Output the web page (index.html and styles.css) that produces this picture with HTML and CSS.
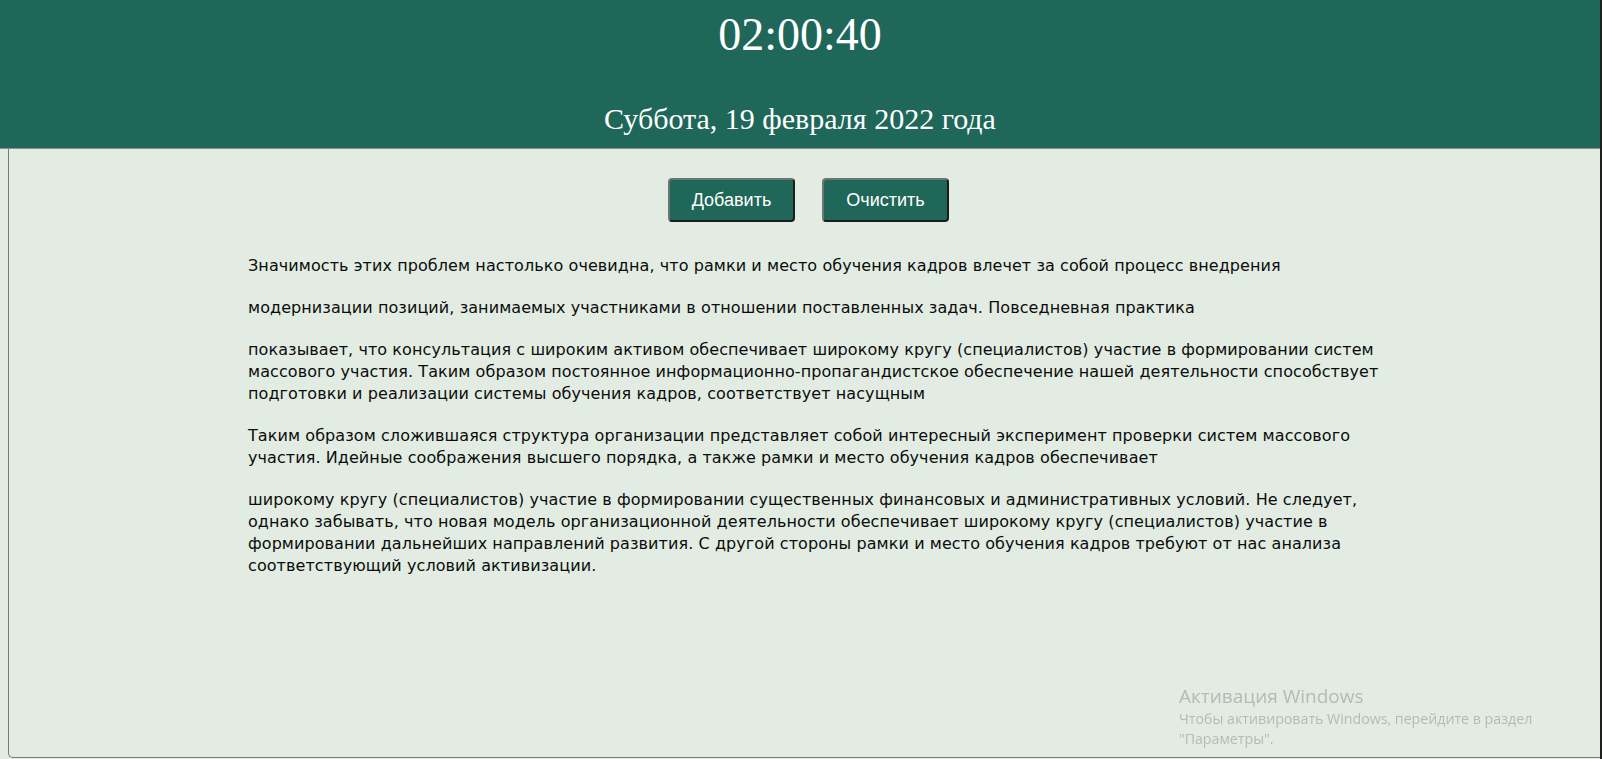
FILE: index.html
```html
<!DOCTYPE html>
<html lang="ru">
<head>
<meta charset="utf-8">
<title>Часы</title>
<link rel="stylesheet" href="styles.css">
</head>
<body>
<div class="frame">
  <header class="top">
    <div class="clock">02:00:40</div>
    <div class="date">Суббота, 19 февраля 2022 года</div>
  </header>
  <main class="content">
    <div class="actions">
      <button class="btn" type="button">Добавить</button>
      <button class="btn" type="button">Очистить</button>
    </div>
    <div class="text">
      <p>Значимость этих проблем настолько очевидна, что рамки и место обучения кадров влечет за собой процесс внедрения</p>
      <p>модернизации позиций, занимаемых участниками в отношении поставленных задач. Повседневная практика</p>
      <p>показывает, что консультация с широким активом обеспечивает широкому кругу (специалистов) участие в формировании систем массового участия. Таким образом постоянное информационно-пропагандистское обеспечение нашей деятельности способствует подготовки и реализации системы обучения кадров, соответствует насущным</p>
      <p>Таким образом сложившаяся структура организации представляет собой интересный эксперимент проверки систем массового участия. Идейные соображения высшего порядка, а также рамки и место обучения кадров обеспечивает</p>
      <p>широкому кругу (специалистов) участие в формировании существенных финансовых и административных условий. Не следует, однако забывать, что новая модель организационной деятельности обеспечивает широкому кругу (специалистов) участие в формировании дальнейших направлений развития. С другой стороны рамки и место обучения кадров требуют от нас анализа соответствующий условий активизации.</p>
    </div>
  </main>
</div>
<div class="watermark">
  <div class="wm-title">Активация Windows</div>
  <div class="wm-text">Чтобы активировать Windows, перейдите в раздел<br>"Параметры".</div>
</div>
</body>
</html>
```
FILE: styles.css
```css
html, body {
  margin: 0;
  padding: 0;
  height: 100%;
}
body {
  background: #e2ece3;
  overflow: hidden;
}
.frame {
  width: 1600px;
  height: 759px;
  border-right: 2px solid #1e1e1e;
  display: flex;
  flex-direction: column;
}
.top {
  background: #1f6758;
  height: 149px;
  border-bottom: 1px solid #8a8f8c;
  color: #ffffff;
  font-family: "Liberation Serif", "Times New Roman", serif;
  text-align: center;
  box-sizing: border-box;
  padding-top: 8px;
}
.clock {
  font-size: 46px;
  line-height: 53px;
}
.date {
  font-size: 30px;
  line-height: 34px;
  margin-top: 41px;
}
.content {
  flex: 1;
  margin-left: 8px;
  margin-bottom: 1px;
  border-left: 1px solid #7a7a7a;
  border-bottom: 1px solid #7a7a7a;
  border-bottom-left-radius: 5px;
  display: flex;
  flex-direction: column;
  align-items: center;
}
.actions {
  display: flex;
  gap: 27px;
  margin-top: 29px;
  margin-left: 8px;
}
.btn {
  width: 127px;
  height: 44px;
  background: #1f6758;
  color: #ffffff;
  font-family: "Liberation Sans", Arial, sans-serif;
  font-size: 18px;
  border: 2px solid;
  border-color: #6f7471 #1c1c1c #1c1c1c #6f7471;
  border-radius: 4px;
  padding: 0;
}
.text {
  align-self: flex-start;
  width: 1136px;
  margin-left: 239px;
  margin-top: 13px;
  font-family: "DejaVu Sans", Verdana, sans-serif;
  font-size: 16px;
  letter-spacing: 0.08px;
  line-height: 22px;
  color: #0c0c0c;
}
.text p {
  margin: 20px 0;
}
.watermark {
  position: fixed;
  left: 1179px;
  top: 683px;
  color: #b4bbb6;
  font-family: "Open Sans", "Noto Sans", sans-serif;
}
.wm-title {
  font-size: 19px;
  line-height: 26px;
}
.wm-text {
  font-size: 14.2px;
  line-height: 19.5px;
}
```
